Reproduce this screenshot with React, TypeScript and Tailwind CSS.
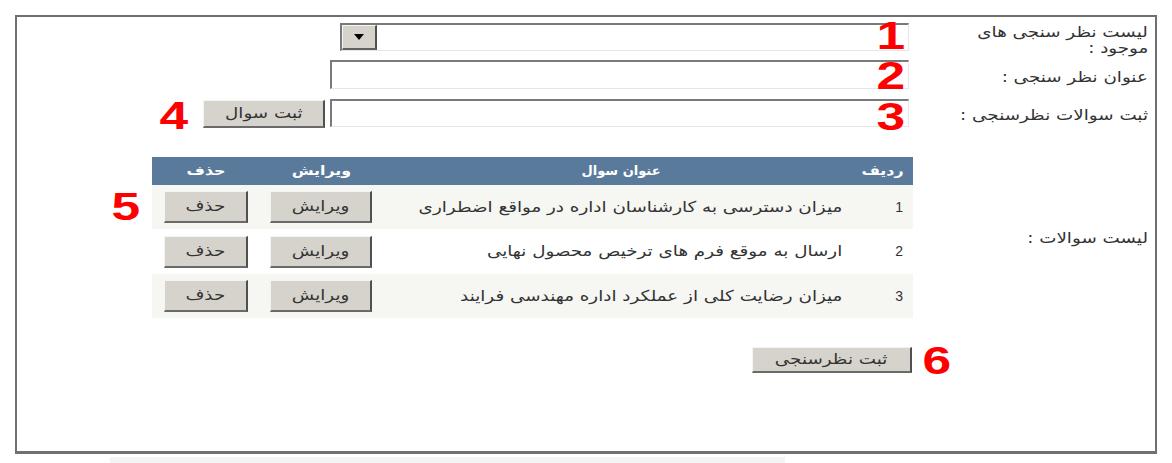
import React from "react";

const fa = { fontFamily: '"DejaVu Sans", "Noto Sans", sans-serif' };

const Num = ({ n, className = "" }: { n: string; className?: string }) => (
  <span
    className={`font-bold text-[#ff0000] text-[39px] leading-[26px] inline-block scale-x-[1.32] ${className}`}
    style={{ fontFamily: '"Liberation Sans", Arial, sans-serif' }}
  >
    {n}
  </span>
);

const Wide = ({ children, className = "origin-right" }: { children: React.ReactNode; className?: string }) => (
  <span className={`inline-block whitespace-nowrap scale-x-[1.22] ${className}`}>{children}</span>
);

const Btn = ({ children, className = "" }: { children: React.ReactNode; className?: string }) => (
  <button
    className={`bg-[#d6d3cc] border-solid border-t-[1px] border-l-[1px] border-r-[2px] border-b-[2px] border-t-[#f4f4f4] border-l-[#f4f4f4] border-r-[#505050] border-b-[#6a6a6a] text-[15px] leading-none text-[#333] flex items-center justify-center ${className}`}
    style={fa}
  >
    <Wide className="origin-center">{children}</Wide>
  </button>
);

const rows = [
  { id: "1", title: "میزان دسترسی به کارشناسان اداره در مواقع اضطراری", bg: "bg-[#f6f6f3]", h: "h-[44px]" },
  { id: "2", title: "ارسال به موقع فرم های ترخیص محصول نهایی", bg: "bg-white", h: "h-[45px]" },
  { id: "3", title: "میزان رضایت کلی از عملکرد اداره مهندسی فرایند", bg: "bg-[#f6f6f3]", h: "h-[44px]" },
];

const inputCls =
  "bg-white border-solid border-t-[2px] border-l-[2px] border-b-[1px] border-r-[1px] border-t-[#7a7a7a] border-l-[#7a7a7a] border-b-[#e6e6e6] border-r-[#e6e6e6]";

export default function App() {
  return (
    <div className="w-[1172px] h-[463px] bg-white overflow-hidden pt-[15px] pl-[15px]" style={fa}>
      <div className="w-[1142px] h-[439px] border-solid border-2 border-[#707070] border-b-[3px]" dir="rtl">
        {/* Row 1 */}
        <div className="flex h-[39px]">
          <div className="w-[242px] pr-[7px] pt-[7px] text-[15px] leading-[16px] text-[#333]">
            <Wide>لیست نظر سنجی های</Wide>
            <br />
            <Wide>موجود :</Wide>
          </div>
          <div className="flex-1 pt-[6px]">
            <div className={`relative mr-[4px] w-[569px] h-[28px] flex items-center justify-end ${inputCls}`}>
              <div className="w-[35px] h-[25px] bg-[#d6d3cc] border-solid border-t border-l border-r-2 border-b-2 border-t-[#f4f4f4] border-l-[#f4f4f4] border-r-[#505050] border-b-[#606060] flex items-center justify-center">
                <svg width="10" height="6" viewBox="0 0 10 6">
                  <path d="M0 0 L10 0 L5 6 Z" fill="#000" />
                </svg>
              </div>
              <Num n="1" className="absolute right-[6px] top-[-2px]" />
            </div>
          </div>
        </div>
        {/* Row 2 */}
        <div className="flex h-[39px]">
          <div className="w-[242px] pr-[7px] pt-[13px] text-[15px] leading-[16px] text-[#333]">
            <Wide>عنوان نظر سنجی :</Wide>
          </div>
          <div className="flex-1 pt-[4px]">
            <div className={`relative mr-[4px] w-[579px] h-[29px] ${inputCls}`}>
              <Num n="2" className="absolute right-[6px] top-[1px]" />
            </div>
          </div>
        </div>
        {/* Row 3 */}
        <div className="flex h-[39px]">
          <div className="w-[242px] pr-[7px] pt-[12px] text-[15px] leading-[16px] text-[#333]">
            <Wide>ثبت سوالات نظرسنجی :</Wide>
          </div>
          <div className="flex-1 pt-[4px] flex items-start">
            <div className={`relative mr-[4px] w-[579px] h-[28px] ${inputCls}`}>
              <Num n="3" className="absolute right-[6px] top-[3px]" />
            </div>
            <Btn className="mr-[5px] w-[122px] h-[28px] mt-[1px]">ثبت سوال</Btn>
            <Num n="4" className="mr-[18px] mt-[4px]" />
          </div>
        </div>
        {/* Table row */}
        <div className="flex mt-[23px]">
          <div className="w-[242px] pr-[7px] text-[15px] leading-[16px] text-[#333] flex items-center">
            <Wide>لیست سوالات :</Wide>
          </div>
          <div className="flex-1">
            <div className="relative w-[761px]">
              <Num n="5" className="absolute left-[-37px] top-[37px]" />
              <div className="flex h-[28px] bg-[#5a7a9c] text-white text-[13px] font-bold items-center">
                <div className="w-[53px] pr-[9px] text-right">
                  <Wide>ردیف</Wide>
                </div>
                <div className="w-[478px] text-center">
                  <span className="inline-block">عنوان سوال</span>
                </div>
                <div className="w-[122px] text-center">
                  <Wide className="origin-center">ویرایش</Wide>
                </div>
                <div className="w-[108px] text-center">
                  <Wide className="origin-center">حذف</Wide>
                </div>
              </div>
              {rows.map((r) => (
                <div key={r.id} className={`flex items-center ${r.h} ${r.bg} text-[15px] text-[#333]`}>
                  <div
                    className="w-[53px] pr-[10px] text-right"
                    style={{ fontFamily: '"Liberation Sans", sans-serif', fontSize: 14 }}
                  >
                    {r.id}
                  </div>
                  <div className="w-[478px] pr-[18px] text-right">
                    <Wide>{r.title}</Wide>
                  </div>
                  <div className="w-[122px] flex justify-center">
                    <Btn className="w-[102px] h-[32px]">ویرایش</Btn>
                  </div>
                  <div className="w-[108px] flex justify-center">
                    <Btn className="w-[84px] h-[32px]">حذف</Btn>
                  </div>
                </div>
              ))}
            </div>
          </div>
        </div>
        {/* Submit */}
        <div className="flex mt-[29px]">
          <div className="w-[242px]" />
          <div className="flex-1">
            <div className="relative mr-[1px] w-[160px]">
              <Btn className="w-[160px] h-[26px]">ثبت نظرسنجی</Btn>
              <Num n="6" className="absolute right-[-36px] top-[1px]" />
            </div>
          </div>
        </div>
      </div>
      <div className="ml-[95px] mt-[3px] w-[675px] h-[6px] bg-[#f3f3f3]" />
    </div>
  );
}
